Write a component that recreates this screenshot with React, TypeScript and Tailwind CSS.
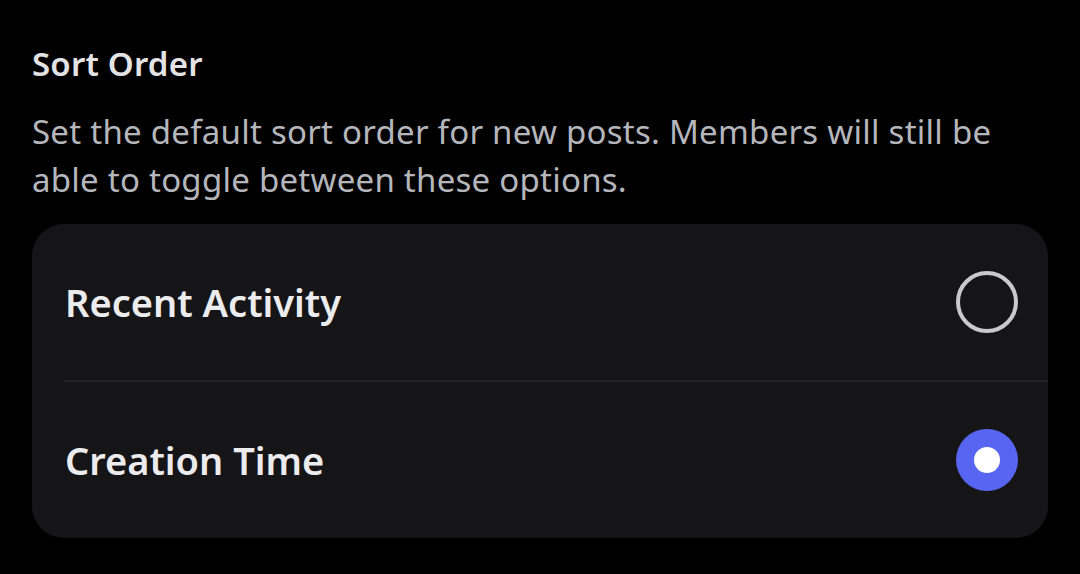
import { useState } from "react";

const options = ["Recent Activity", "Creation Time"];

function Radio({ checked }: { checked: boolean }) {
  if (checked) {
    return (
      <div className="w-[62px] h-[62px] rounded-full bg-[#5865f2] flex items-center justify-center">
        <div className="w-[26px] h-[26px] rounded-full bg-white" />
      </div>
    );
  }
  return <div className="w-[62px] h-[62px] rounded-full border-[4px] border-[#c9c9cd]" />;
}

export default function App() {
  const [selected, setSelected] = useState("Creation Time");

  return (
    <div className="min-h-screen w-full bg-black px-[32px] pt-[40px] font-['Noto_Sans',sans-serif]">
      <h2 className="text-[33px] leading-[48px] tracking-[0.2px] font-semibold text-[#e3e3e6]">Sort Order</h2>
      <p className="mt-[20px] text-[33px] leading-[48px] tracking-[0.25px] text-[#b5b6bc]">
        Set the default sort order for new posts. Members will still be
        <br />
        able to toggle between these options.
      </p>
      <div className="mt-[20px] rounded-[32px] bg-[#151518] overflow-hidden">
        {options.map((opt, i) => (
          <div key={opt}>
            {i > 0 && <div className="ml-[32px] h-[2px] bg-[#232327]" />}
            <button
              onClick={() => setSelected(opt)}
              className="w-full h-[156px] flex items-center justify-between pl-[33px] pr-[30px] text-left"
            >
              <span className="text-[38px] font-semibold text-[#ececee]">{opt}</span>
              <Radio checked={selected === opt} />
            </button>
          </div>
        ))}
      </div>
    </div>
  );
}
